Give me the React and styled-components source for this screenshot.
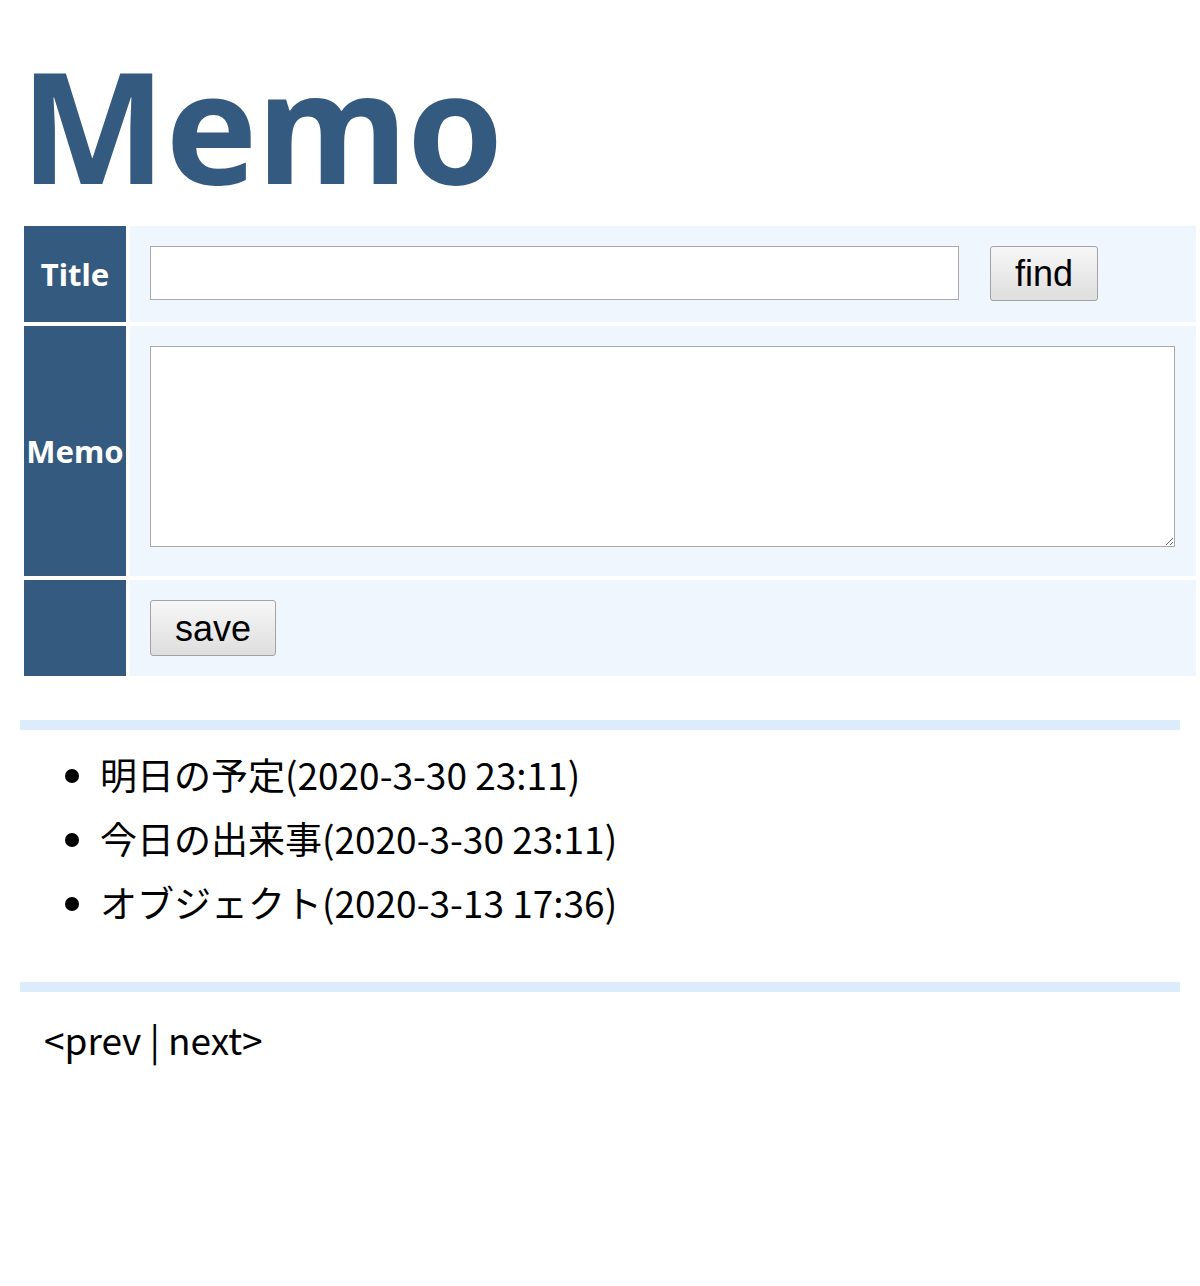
import React from "react";
import styled, { createGlobalStyle } from "styled-components";

const Global = createGlobalStyle`
  html, body { margin: 0; padding: 0; background: #ffffff; }
  body { font-family: "Noto Sans", "Noto Sans CJK JP", sans-serif; color: #000; }
`;

const Page = styled.div`
  padding: 0 20px 40px 20px;
`;

const Heading = styled.h1`
  margin: 44px 0 18px 0;
  font-family: "Noto Sans", sans-serif;
  font-weight: 700;
  font-size: 155px;
  line-height: 160px;
  color: #345a80;
  letter-spacing: -1px;
`;

const FormGrid = styled.div`
  display: grid;
  grid-template-columns: 102px 1066px;
  gap: 4px;
  padding: 4px;
  width: 1180px;
  box-sizing: border-box;
`;

const HeadCell = styled.div`
  background: #345a80;
  color: #ffffff;
  font-family: "Noto Sans", sans-serif;
  font-weight: 700;
  font-size: 31px;
  display: flex;
  align-items: center;
  justify-content: center;
  height: ${(p) => p.$h}px;
`;

const DataCell = styled.div`
  background: #eff6fe;
  box-sizing: border-box;
  height: ${(p) => p.$h}px;
  padding: 20px 21px 0 20px;
  display: flex;
  align-items: flex-start;
  gap: 31px;
`;

const TextInput = styled.input`
  width: 809px;
  height: 54px;
  box-sizing: border-box;
  border: 1px solid #a9a9a9;
  background: #fff;
  font-size: 30px;
  padding: 2px 6px;
  margin: 0;
`;

const TextArea = styled.textarea`
  width: 1025px;
  height: 201px;
  box-sizing: border-box;
  border: 1px solid #a9a9a9;
  background: #fff;
  font-size: 30px;
  margin: 0;
  resize: both;
`;

const Button = styled.button`
  font-family: "Liberation Sans", Arial, sans-serif;
  font-size: 36px;
  line-height: 41px;
  height: ${(p) => p.$h || 55}px;
  padding: 0 24px;
  margin: 0;
  color: #000;
  border: 1px solid #a3a3a3;
  border-radius: 3px;
  background: linear-gradient(#f7f7f7, #dedede);
  box-sizing: border-box;
  cursor: pointer;
`;

const Divider = styled.div`
  height: 10px;
  background: #dcecfc;
  margin-top: ${(p) => p.$mt}px;
`;

const List = styled.ul`
  margin: 12px 0 0 0;
  padding: 0 0 0 80px;
  font-family: "Noto Sans CJK JP", sans-serif;
  font-size: 37px;
  line-height: 64px;
  list-style: disc;
`;

const Item = styled.li`
  padding: 0;
`;

const Pager = styled.div`
  padding: 25px 0 0 24px;
  font-family: "Noto Sans CJK JP", sans-serif;
  font-size: 37px;
  line-height: 44px;
`;

const memos = [
  "明日の予定(2020-3-30 23:11)",
  "今日の出来事(2020-3-30 23:11)",
  "オブジェクト(2020-3-13 17:36)",
];

export default function App() {
  return (
    <>
      <Global />
      <Page>
        <Heading>Memo</Heading>
        <FormGrid>
          <HeadCell $h={96}>Title</HeadCell>
          <DataCell $h={96}>
            <TextInput type="text" />
            <Button $h={55}>find</Button>
          </DataCell>
          <HeadCell $h={250}>Memo</HeadCell>
          <DataCell $h={250}>
            <TextArea />
          </DataCell>
          <HeadCell $h={96} />
          <DataCell $h={96}>
            <Button $h={56}>save</Button>
          </DataCell>
        </FormGrid>
        <Divider $mt={40} />
        <List>
          {memos.map((m) => (
            <Item key={m}>{m}</Item>
          ))}
        </List>
        <Divider $mt={48} />
        <Pager>&lt;prev | next&gt;</Pager>
      </Page>
    </>
  );
}
